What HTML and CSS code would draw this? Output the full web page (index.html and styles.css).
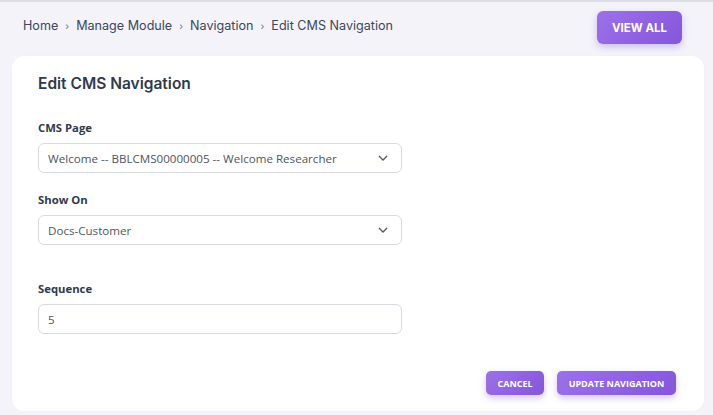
FILE: index.html
```html
<!DOCTYPE html>
<html lang="en">
<head>
<meta charset="utf-8">
<title>Edit CMS Navigation</title>
<link rel="stylesheet" href="styles.css">
</head>
<body>
<div class="page">
  <header class="topbar">
    <nav class="crumbs">
      <span>Home</span><span class="sep">›</span>
      <span>Manage Module</span><span class="sep">›</span>
      <span>Navigation</span><span class="sep">›</span>
      <span>Edit CMS Navigation</span>
    </nav>
    <button class="btn btn-top">VIEW ALL</button>
  </header>
  <main class="card">
    <h1 class="title">Edit CMS Navigation</h1>
    <div class="field">
      <label class="label">CMS Page</label>
      <div class="control select">
        <span>Welcome -- BBLCMS00000005 -- Welcome Researcher</span>
        <svg class="chev" width="10" height="6" viewBox="0 0 10 6"><path d="M1 1l4 4 4-4" fill="none" stroke="#555" stroke-width="1.3"/></svg>
      </div>
    </div>
    <div class="field">
      <label class="label">Show On</label>
      <div class="control select">
        <span>Docs-Customer</span>
        <svg class="chev" width="10" height="6" viewBox="0 0 10 6"><path d="M1 1l4 4 4-4" fill="none" stroke="#555" stroke-width="1.3"/></svg>
      </div>
    </div>
    <div class="field field-seq">
      <label class="label">Sequence</label>
      <div class="control"><span>5</span></div>
    </div>
    <div class="actions">
      <button class="btn btn-sm btn-cancel">CANCEL</button>
      <button class="btn btn-sm btn-update">UPDATE NAVIGATION</button>
    </div>
  </main>
</div>
</body>
</html>
```

FILE: styles.css
```css
html, body {
  margin: 0;
  padding: 0;
  background: #f4f3f9;
}
body {
  border-top: 2px solid #dedde3;
  height: 413px;
  overflow: hidden;
  font-family: "Open Sans", "Liberation Sans", sans-serif;
}
.page {
  display: flex;
  flex-direction: column;
}
.topbar {
  display: flex;
  justify-content: space-between;
  align-items: flex-start;
  padding: 9px 31px 0 23px;
  height: 45px;
}
.crumbs {
  display: flex;
  align-items: center;
  font-family: "Inter", "Liberation Sans", sans-serif;
  font-size: 12.6px;
  color: #3a475b;
  margin-top: 7px;
}
.crumbs .sep {
  font-size: 10px;
  margin: 0 7px;
  color: #6a7282;
}
.btn {
  border: none;
  color: #fff;
  font-family: "Inter", "Liberation Sans", sans-serif;
  font-weight: 700;
  background: linear-gradient(135deg, #9d70ea 0%, #8456da 100%);
  box-shadow: 0 3px 7px rgba(133, 90, 220, 0.35);
  cursor: pointer;
}
.btn-top {
  width: 85px;
  height: 33px;
  border-radius: 6px;
  font-size: 11.5px;
}
.card {
  background: #fff;
  margin: 0 9px 0 12px;
  border-radius: 12px;
  padding: 18px 28px 16px 26px;
  height: 321px;
  box-sizing: content-box;
  display: flex;
  flex-direction: column;
  box-shadow: 0 0 2px rgba(0,0,0,0.03);
}
.title {
  margin: 0;
  font-family: "Inter", "Liberation Sans", sans-serif;
  font-weight: 600;
  font-size: 15.5px;
  line-height: 20px;
  color: #2e3a4d;
}
.field {
  display: flex;
  flex-direction: column;
  margin-top: 26px;
}
.field + .field {
  margin-top: 19px;
}
.field.field-seq {
  margin-top: 36px;
}
.label {
  font-size: 11.3px;
  font-weight: 700;
  line-height: 16px;
  color: #2f3a4c;
  margin-bottom: 7px;
}
.control {
  width: 364px;
  height: 30px;
  box-sizing: border-box;
  border: 1px solid #d8dae0;
  border-radius: 6px;
  display: flex;
  align-items: center;
  justify-content: space-between;
  padding: 0 13px 0 9px;
  font-size: 11.6px;
  color: #50555e;
}
.chev {
  display: block;
}
.actions {
  display: flex;
  justify-content: flex-end;
  gap: 13px;
  margin-top: auto;
}
.btn-sm {
  height: 24px;
  border-radius: 5px;
  font-size: 9px;
  padding: 0;
  font-family: "Open Sans", "Liberation Sans", sans-serif;
}
.btn-cancel {
  width: 58px;
}
.btn-update {
  width: 119px;
}
```
